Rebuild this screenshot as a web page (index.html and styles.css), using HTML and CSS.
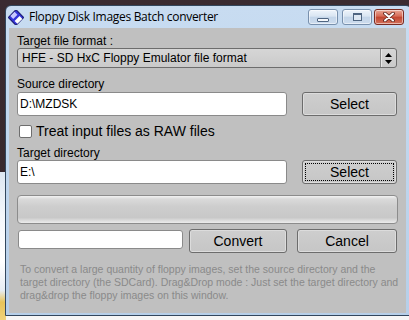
FILE: index.html
```html
<!DOCTYPE html>
<html lang="en">
<head>
    <meta charset="UTF-8">
    <title>Floppy Disk Images Batch converter</title>
    <link rel="stylesheet" href="styles.css">
</head>
<body>
    <div class="behind"></div>

    <div class="window">
        <div class="titlebar">
            <svg class="app-icon" width="16" height="15" viewBox="0 0 16 15">
                <g transform="rotate(-45 8 7.5)">
                    <rect x="2.5" y="2" width="11" height="11" rx="1" fill="#3434d8" stroke="#16166e"/>
                    <rect x="5" y="2.5" width="6" height="4" fill="#c8c8ff"/>
                    <rect x="4.5" y="9" width="7" height="4" fill="#ffffff"/>
                </g>
            </svg>
            <span class="title">Floppy Disk Images Batch converter</span>
            <div class="caption-buttons">
                <div class="cap-btn minimize"><span></span></div>
                <div class="cap-btn maximize"><span></span></div>
                <div class="cap-btn close">
                    <svg width="14" height="10" viewBox="0 0 14 10">
                        <path d="M3 1.5 L11 8.5 M11 1.5 L3 8.5" stroke="#5a2018" stroke-width="3.6" stroke-linecap="round"/>
                        <path d="M3 1.5 L11 8.5 M11 1.5 L3 8.5" stroke="#ffffff" stroke-width="2" stroke-linecap="round"/>
                    </svg>
                </div>
            </div>
        </div>

        <div class="client">
            <div class="label first">Target file format :</div>
            <div class="combo">
                <span class="combo-text">HFE - SD HxC Floppy Emulator file format</span>
                <span class="combo-arrow">
                    <svg width="7" height="11" viewBox="0 0 7 11">
                        <path d="M3.5 0 L7 4 L0 4 Z M0 7 L7 7 L3.5 11 Z" fill="#000"/>
                    </svg>
                </span>
            </div>

            <div class="label">Source directory</div>
            <div class="dir-row">
                <div class="field">D:\MZDSK</div>
                <div class="button">Select</div>
            </div>

            <div class="check">
                <span class="check-box"></span>
                <span>Treat input files as RAW files</span>
            </div>

            <div class="label target">Target directory</div>
            <div class="dir-row second">
                <div class="field">E:\</div>
                <div class="button focused">Select</div>
            </div>

            <div class="progress"></div>

            <div class="action-row">
                <div class="field small"></div>
                <div class="button convert">Convert</div>
                <div class="button cancel">Cancel</div>
            </div>

            <p class="help">To convert a large quantity of floppy images, set the source directory and the target directory (the SDCard). Drag&amp;Drop mode : Just set the target directory and drag&amp;drop the floppy images on this window.</p>
        </div>
    </div>
</body>
</html>
```

FILE: styles.css
```css
* {
    box-sizing: border-box;
}
html, body {
    margin: 0;
    padding: 0;
}
body {
    position: relative;
    width: 409px;
    height: 320px;
    overflow: hidden;
    background: linear-gradient(to bottom, #3a2b31 0, #35272b 316px, #f6f6f6 316px);
    font-family: "Liberation Sans", Arial, sans-serif;
}
.behind {
    position: absolute;
    left: 0;
    top: 172px;
    width: 6px;
    height: 148px;
    background: linear-gradient(#dde7f2 0, #f4f7fb 30%, #ffffff 60%, #e6edf4 80%, #e8c45a 88%, #f0d27a 100%);
}
.window {
    position: absolute;
    left: 5px;
    top: 5px;
    width: 407px;
    height: 311px;
    border: 1px solid #33475d;
    border-radius: 6px 6px 0 0;
    background: linear-gradient(#c8dcf1, #b6cfe9);
    padding: 0 5px 2px 3px;
    display: flex;
    flex-direction: column;
}
.titlebar {
    height: 22px;
    margin: 0 -5px 0 -3px;
    padding: 0 7px 0 2px;
    display: flex;
    align-items: center;
}
.app-icon {
    flex: none;
}
.title {
    margin-left: 5px;
    font-family: "Open Sans", "Noto Sans", sans-serif;
    font-size: 12px;
    line-height: 16px;
    letter-spacing: -0.3px;
    color: #000;
}
.caption-buttons {
    margin-left: auto;
    display: flex;
}
.cap-btn {
    width: 30px;
    height: 16px;
    border: 1px solid #7890ad;
    border-radius: 3px;
    background: linear-gradient(#eef4fb 0, #d9e5f2 45%, #c3d5e9 50%, #cddcee 100%);
    box-shadow: inset 0 0 0 1px rgba(255,255,255,0.5);
    display: flex;
    align-items: center;
    justify-content: center;
}
.cap-btn.maximize {
    margin-left: 4px;
}
.cap-btn.close {
    margin-left: 2px;
    border-color: #7a2b22;
    background: linear-gradient(#e9a897 0, #d66a55 45%, #c2452f 50%, #d3715c 100%);
}
.minimize span {
    width: 12px;
    height: 4px;
    margin-top: 5px;
    border: 1px solid #4f6581;
    border-radius: 1px;
    background: #f4f7fb;
}
.maximize span {
    width: 9px;
    height: 8px;
    border: 1px solid #4f6581;
    border-top-width: 2px;
    background: #dde7f2;
}
.client {
    height: 285px;
    background: #c0c0c0;
    padding: 0 9px 0 8px;
    display: flex;
    flex-direction: column;
    font-size: 12px;
    color: #000;
}
.label {
    margin-top: 10px;
    font-size: 12px;
    line-height: 13px;
    height: 13px;
}
.label.first {
    margin-top: 7px;
}
.label.target {
    margin-top: 8px;
}
.combo {
    height: 20px;
    border: 1px solid #6d6d6d;
    border-radius: 3px;
    background: linear-gradient(#d6d6d6, #cacaca);
    display: flex;
    align-items: center;
}
.combo-text {
    padding-left: 4px;
    flex: 1;
}
.combo-arrow {
    width: 16px;
    height: 100%;
    border-left: 1px solid #8a8a8a;
    box-shadow: inset 1px 0 0 #e6e6e6;
    display: flex;
    align-items: center;
    justify-content: center;
}
.dir-row {
    margin-top: 1px;
    height: 25px;
    display: flex;
    align-items: flex-start;
}
.dir-row.second {
    margin-top: 0;
}
.field {
    width: 270px;
    height: 24px;
    border: 1px solid #8a8a8a;
    border-radius: 3px;
    background: #fff;
    padding-left: 2px;
    font-size: 12px;
    line-height: 22px;
}
.button {
    position: relative;
    margin-left: auto;
    width: 95px;
    height: 24px;
    border: 1px solid #6c6c6c;
    border-radius: 3px;
    background: linear-gradient(#cecece, #c6c6c6);
    box-shadow: inset 0 0 0 1px #dcdcdc;
    font-size: 14px;
    line-height: 22px;
    text-align: center;
}
.button.focused::after {
    content: "";
    position: absolute;
    inset: 2px;
    border: 1px dotted #000;
}
.check {
    margin-top: 7px;
    height: 15px;
    display: flex;
    align-items: center;
    font-size: 14px;
    line-height: 15px;
}
.check-box {
    width: 13px;
    height: 13px;
    margin: 0 4px 0 2px;
    border: 1px solid #6e6e6e;
    border-radius: 2px;
    background: #fff;
}
.progress {
    margin-top: 10px;
    margin-right: -1px;
    height: 29px;
    border: 1px solid #8c8c8c;
    border-radius: 4px;
    background: linear-gradient(#f2f2f2 0, #dadada 3px, #cdcdcd 40%, #c8c8c8 80%, #dedede 92%, #ececec 100%);
}
.action-row {
    margin-top: 5px;
    height: 24px;
    display: flex;
    align-items: flex-start;
}
.field.small {
    width: 165px;
    height: 19px;
    margin: 1px 0 0 1px;
}
.button.convert {
    margin-left: 6px;
    width: 98px;
}
.button.cancel {
    width: 100px;
}
.help {
    margin: 10px -6px 0 0;
    padding-left: 3px;
    width: 386px;
    font-size: 10.5px;
    line-height: 13px;
    color: #8a8a8a;
}
```
